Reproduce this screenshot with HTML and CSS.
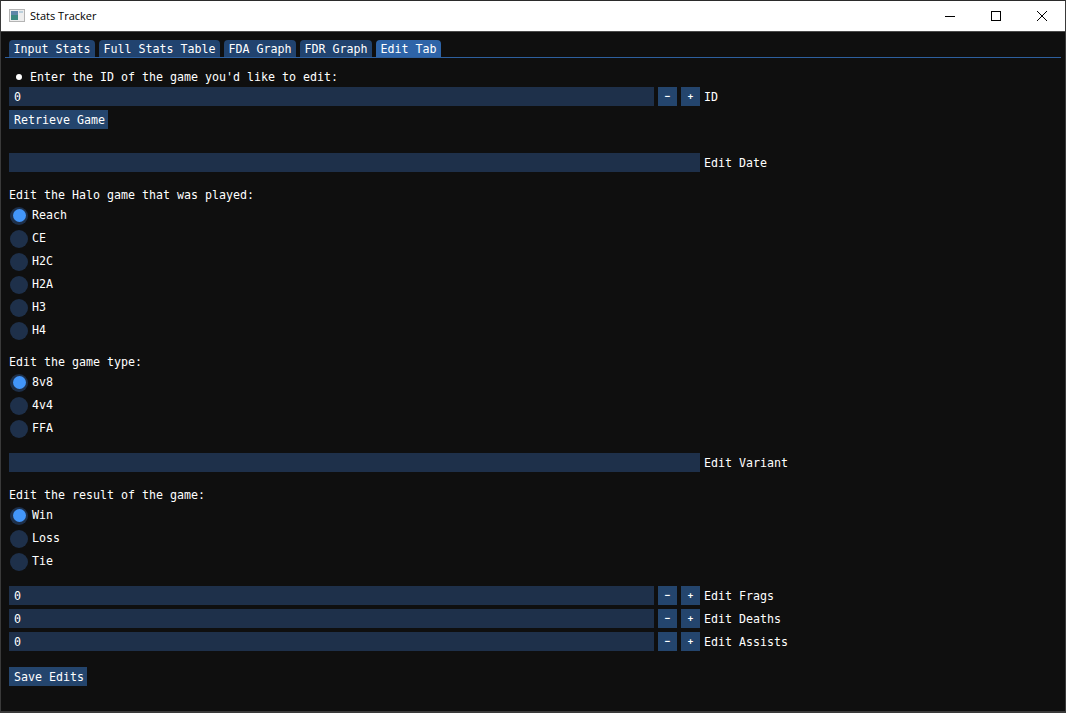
FILE: index.html
```html
<!DOCTYPE html>
<html lang="en">
<head>
<meta charset="utf-8">
<title>Stats Tracker</title>
<link rel="stylesheet" href="styles.css">
</head>
<body>
<div class="window">
  <header class="titlebar">
    <svg class="app-icon" width="16" height="14" viewBox="0 0 16 14">
      <rect x="0.5" y="0.5" width="15" height="12" fill="#eeeeee" stroke="#b4b4b4"/>
      <rect x="2" y="2" width="7" height="9" fill="#3d8a80"/>
      <rect x="2" y="2" width="7" height="4" fill="#5f87a8"/>
      <rect x="10" y="2" width="4" height="2" fill="#bcd0dc"/>
    </svg>
    <span class="app-title">Stats Tracker</span>
    <div class="controls">
      <span class="ctl"><svg width="12" height="12" viewBox="0 0 12 12"><path d="M1 6.5H11" stroke="#000" fill="none"/></svg></span>
      <span class="ctl"><svg width="12" height="12" viewBox="0 0 12 12"><rect x="1.5" y="1.5" width="9" height="9" stroke="#000" fill="none"/></svg></span>
      <span class="ctl"><svg width="12" height="12" viewBox="0 0 12 12"><path d="M1 1L11 11M11 1L1 11" stroke="#000" fill="none"/></svg></span>
    </div>
  </header>
  <main class="client">
    <nav class="tabs">
      <span class="tab">Input Stats</span>
      <span class="tab">Full Stats Table</span>
      <span class="tab">FDA Graph</span>
      <span class="tab">FDR Graph</span>
      <span class="tab active">Edit Tab</span>
    </nav>
    <section class="form">
      <div class="text bullet"><i class="dot"></i>Enter the ID of the game you'd like to edit:</div>
      <div class="row">
        <div class="field grow">0</div><button class="btn step">−</button><button class="btn step">+</button><span class="label">ID</span>
      </div>
      <div class="row"><button class="btn">Retrieve Game</button></div>

      <div class="row s20"><div class="field wide"></div><span class="label">Edit Date</span></div>

      <div class="text s13">Edit the Halo game that was played:</div>
      <div class="radio on"><i></i>Reach</div>
      <div class="radio"><i></i>CE</div>
      <div class="radio"><i></i>H2C</div>
      <div class="radio"><i></i>H2A</div>
      <div class="radio"><i></i>H3</div>
      <div class="radio"><i></i>H4</div>

      <div class="text s12">Edit the game type:</div>
      <div class="radio on"><i></i>8v8</div>
      <div class="radio"><i></i>4v4</div>
      <div class="radio"><i></i>FFA</div>

      <div class="row s11"><div class="field wide"></div><span class="label">Edit Variant</span></div>

      <div class="text s13">Edit the result of the game:</div>
      <div class="radio on"><i></i>Win</div>
      <div class="radio"><i></i>Loss</div>
      <div class="radio"><i></i>Tie</div>

      <div class="row s11"><div class="field grow">0</div><button class="btn step">−</button><button class="btn step">+</button><span class="label">Edit Frags</span></div>
      <div class="row"><div class="field grow">0</div><button class="btn step">−</button><button class="btn step">+</button><span class="label">Edit Deaths</span></div>
      <div class="row"><div class="field grow">0</div><button class="btn step">−</button><button class="btn step">+</button><span class="label">Edit Assists</span></div>

      <div class="row s12"><button class="btn">Save Edits</button></div>
    </section>
  </main>
</div>
</body>
</html>
```
FILE: styles.css
```css
* { box-sizing: border-box; }
html, body { margin: 0; height: 100%; background: #0f0f0f; overflow: hidden; }
.window {
  width: 1066px; height: 713px; display: flex; flex-direction: column;
  border: 1px solid #3a3a3a; border-top-color: #2b2b2b; border-bottom-width: 2px;
  background: #0f0f0f;
}
.titlebar {
  height: 31px; flex: none; display: flex; align-items: center; background: #fff;
  border-bottom: 1px solid #4a4a4a; padding-left: 8px;
  font: 11px "Open Sans", "Liberation Sans", sans-serif; color: #000;
}
.app-icon { flex: none; }
.app-title { margin-left: 5px; margin-top: -2px; }
.controls { margin-left: auto; display: flex; }
.ctl { width: 46px; height: 30px; display: flex; align-items: center; justify-content: center; }
.client {
  flex: 1; padding: 8px 4px 0 4px; color: #fff;
  font: 11.63px/13px "DejaVu Sans Mono", "Liberation Mono", monospace;
}
.tabs { display: flex; gap: 4px; padding-left: 4px; height: 18px; border-bottom: 1px solid #2d5f9e; }
.tab {
  height: 17px; padding: 1px 4.5px 0; line-height: 17px; background: #21436f;
  border-radius: 4px 4px 0 0; white-space: pre;
}
.tab.active { background: #2e64a8; }
.form { padding: 12px 0 0 4px; display: flex; flex-direction: column; gap: 4px; }
.text { height: 13px; white-space: pre; }
.bullet { display: flex; align-items: center; padding: 1px 0 0 7px; }
.dot { width: 6px; height: 6px; border-radius: 50%; background: #fff; margin-right: 8px; margin-top: -1px; }
.row { display: flex; gap: 4px; height: 19px; align-items: stretch; }
.field { background: #1e304a; padding: 1px 5px 0; line-height: 19px; }
.grow { width: 645px; }
.wide { width: 691px; }
.label { padding-top: 1px; line-height: 19px; white-space: pre; }
.btn {
  border: 0; margin: 0; padding: 1px 3px 0 5px; background: #24456d; color: #fff; font: inherit;
  line-height: 19px; height: 19px;
}
.step { width: 19px; padding: 0; font-size: 9px; font-weight: bold; }
.radio { display: flex; align-items: center; gap: 4px; height: 19px; line-height: 19px; white-space: pre; }
.radio i {
  width: 18px; height: 18px; margin-left: 1px; border-radius: 50%; background: #1e304a;
  display: flex; align-items: center; justify-content: center; flex: none;
}
.radio.on i::after { content: ""; width: 13px; height: 13px; border-radius: 50%; background: #4296fa; }
.s20 { margin-top: 20px; }
.s13 { margin-top: 13px; }
.s11 { margin-top: 11px; }
.s12 { margin-top: 12px; }
```
